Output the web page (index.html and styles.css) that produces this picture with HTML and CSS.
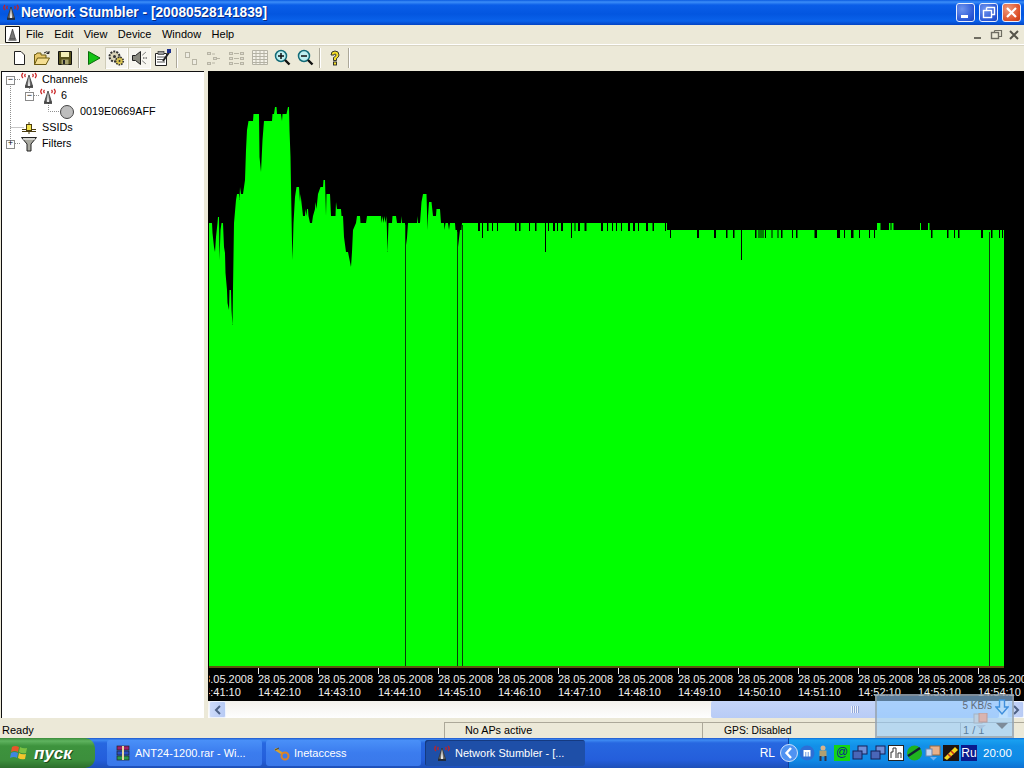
FILE: index.html
```html
<!DOCTYPE html>
<html lang="en">
<head>
<meta charset="utf-8">
<title>Network Stumbler</title>
<link rel="stylesheet" href="styles.css">
</head>
<body>
<svg class="defs" width="0" height="0" aria-hidden="true">
  <symbol id="ant" viewBox="0 0 18 16">
    <path d="M3 1Q.5 3.500 3 6M5.500 2Q4 3.500 5.500 5M15 1Q17.500 3.500 15 6M12.500 2Q14 3.500 12.500 5" fill="none" stroke="#c82020" stroke-width="1.200"/>
    <path d="M9 3L12.500 14H5.500Z" fill="#6e6e6e" stroke="#333" stroke-width=".8"/>
    <path d="M9 4L10.200 14H7.800Z" fill="#e8e8e8"/>
    <path d="M5 15H13" stroke="#222" stroke-width="1.500"/>
  </symbol>
</svg>
<div class="screen">
  <header class="titlebar">
    <svg class="title-icon" width="18" height="18"><use href="#ant"/></svg>
    <span class="title-text">Network Stumbler - [20080528141839]</span>
    <div class="win-buttons">
      <span class="win-btn"><svg width="19" height="19" viewBox="0 0 19 19"><rect x="5" y="12" width="7" height="3" fill="#fff"/></svg></span>
      <span class="win-btn"><svg width="19" height="19" viewBox="0 0 19 19"><path d="M7.500 4.500H15.500V11.500H13M7.500 4.500V7" fill="none" stroke="#fff" stroke-width="1.400"/><rect x="4.500" y="7.500" width="8" height="7" fill="none" stroke="#fff" stroke-width="1.400"/></svg></span>
      <span class="win-btn win-close"><svg width="19" height="19" viewBox="0 0 19 19"><path d="M5 5L14 14M14 5L5 14" stroke="#fff" stroke-width="2.200"/></svg></span>
    </div>
  </header>

  <nav class="menubar">
    <svg class="doc-icon" width="15" height="17" viewBox="0 0 15 17"><path d="M.5.5H14.500V16.500H.5Z" fill="#fff" stroke="#111"/><path d="M7.500 3L10.500 13H4.500Z" fill="#777" stroke="#222" stroke-width=".6"/><path d="M3.500 14H11.500" stroke="#111"/></svg>
    <span>File</span><span>Edit</span><span>View</span><span>Device</span><span>Window</span><span>Help</span>
    <div class="mdi-buttons">
      <svg width="16" height="16" viewBox="0 0 16 16"><rect x="4" y="10" width="7" height="2" fill="#6f6d62"/></svg>
      <svg width="16" height="16" viewBox="0 0 16 16"><path d="M6.500 3.500H13.500V9.500H11M6.500 3.500V5" fill="none" stroke="#6f6d62" stroke-width="1.200"/><rect x="3.500" y="5.500" width="7" height="6" fill="none" stroke="#6f6d62" stroke-width="1.400"/></svg>
      <svg width="16" height="16" viewBox="0 0 16 16"><path d="M4 4L12 12M12 4L4 12" stroke="#56544a" stroke-width="2"/></svg>
    </div>
  </nav>

  <div class="toolbar">
    <span class="tool"><svg width="16" height="16" viewBox="0 0 16 16"><path d="M3.500 1.500H10L13.500 5V14.500H3.500Z" fill="#fff" stroke="#222"/></svg></span>
    <span class="tool"><svg width="18" height="16" viewBox="0 0 18 16"><path d="M1.500 14.500V4.500H3L4 3H8V5H13V14.500Z" fill="#e8c96c" stroke="#6b5a10"/><path d="M1.500 14.500L4.500 8H16.500L13 14.500Z" fill="#f4de92" stroke="#6b5a10"/><path d="M11 3Q14 .5 16 3M16 1V3.500H13.500" fill="none" stroke="#222"/></svg></span>
    <span class="tool"><svg width="16" height="16" viewBox="0 0 16 16"><path d="M1.500 1.500H14.500V14.500H1.500Z" fill="#57521c" stroke="#111"/><rect x="4" y="2" width="8" height="5" fill="#f2eeb8"/><rect x="4.500" y="9.500" width="7" height="5" fill="#a8a470"/><rect x="6" y="10" width="2" height="4" fill="#222"/></svg></span>
    <i class="sep"></i>
    <span class="tool"><svg width="16" height="16" viewBox="0 0 16 16"><path d="M2.500 1.500L14 8L2.500 14.500Z" fill="#14c414" stroke="#0a6a0a"/></svg></span>
    <span class="tool on"><svg width="19" height="18" viewBox="0 0 19 18"><circle cx="7.500" cy="7.500" r="5" fill="#d9d4b8" stroke="#333" stroke-width="2" stroke-dasharray="2 1.100"/><circle cx="7.500" cy="7.500" r="1.500" fill="#333"/><circle cx="12.500" cy="12" r="3.800" fill="#d9c452" stroke="#333" stroke-width="1.600" stroke-dasharray="1.600 1"/><circle cx="12.500" cy="12" r="1" fill="#333"/></svg></span>
    <span class="tool on"><svg width="18" height="16" viewBox="0 0 18 16"><path d="M1.500 5.500H4.500L9.500 1.500V14.500L4.500 10.500H1.500Z" fill="#8a8a80" stroke="#222"/><path d="M12 8H17M11.500 5L15 2M11.500 11L15 14" stroke="#333" stroke-dasharray="1.500 1"/></svg></span>
    <span class="tool"><svg width="18" height="18" viewBox="0 0 18 18"><path d="M1.500 4.500H12.500V16.500H1.500Z" fill="#fff" stroke="#222"/><path d="M3 8H11M3 10.500H11M3 13H11" stroke="#555"/><rect x="4" y="2.500" width="6" height="3" fill="#999" stroke="#222" stroke-width=".6"/><path d="M9 12L15 3.500" stroke="#222" stroke-width="2"/><rect x="13" y="0" width="4" height="4" fill="#1c2f8c"/></svg></span>
    <i class="sep sep-b"></i>
    <span class="tool"><svg width="16" height="16" viewBox="0 0 16 16" fill="#efede2" stroke="#b8b5a5"><rect x="2.500" y="2.500" width="4" height="5"/><rect x="9.500" y="9.500" width="4" height="5"/></svg></span>
    <span class="tool"><svg width="16" height="14" viewBox="0 0 16 14" fill="#dedbd0" stroke="#b8b5a5"><rect x="1.500" y="1.500" width="3" height="2"/><rect x="7.500" y="6.500" width="3" height="2"/><rect x="1.500" y="11.500" width="3" height="2"/><path d="M6 3H9M11 7.500H14M6 12H9" fill="none"/></svg></span>
    <span class="tool"><svg width="16" height="14" viewBox="0 0 16 14" fill="#dedbd0" stroke="#b8b5a5"><rect x=".5" y="1.500" width="3" height="2"/><rect x=".5" y="6.500" width="3" height="2"/><rect x=".5" y="11.500" width="3" height="2"/><rect x="11.500" y="1.500" width="3" height="2"/><rect x="11.500" y="6.500" width="3" height="2"/><rect x="11.500" y="11.500" width="3" height="2"/><path d="M5 2.500H10M5 7.500H10M5 12.500H10" fill="none"/></svg></span>
    <span class="tool"><svg width="16" height="15" viewBox="0 0 16 15"><path d="M.5.5H15.500V14.500H.5ZM.5 3.500H15.500M.5 6.500H15.500M.5 9.500H15.500M.5 12.500H15.500M4 .5V14.500M8 .5V14.500M12 .5V14.500" fill="#f4f2e8" stroke="#b4b2a4"/></svg></span>
    <span class="tool"><svg width="17" height="17" viewBox="0 0 17 17"><circle cx="7" cy="7" r="5.500" fill="#bfeff0" stroke="#136b78" stroke-width="1.500"/><path d="M4 7H10M7 4V10" stroke="#111" stroke-width="1.500"/><path d="M11 11L15.500 15.500" stroke="#111" stroke-width="2.400"/></svg></span>
    <span class="tool"><svg width="17" height="17" viewBox="0 0 17 17"><circle cx="7" cy="7" r="5.500" fill="#bfeff0" stroke="#136b78" stroke-width="1.500"/><path d="M4 7H10" stroke="#111" stroke-width="1.500"/><path d="M11 11L15.500 15.500" stroke="#111" stroke-width="2.400"/></svg></span>
    <i class="sep"></i>
    <span class="tool"><svg width="12" height="16" viewBox="0 0 12 16"><path d="M2 5Q2 1 6 1T10 5Q10 7 7.500 8.500V10.500H4.500V7.500Q7 6.500 7 5Q7 4 6 4T5 5Z" fill="#f5e02a" stroke="#222" stroke-width=".9"/><rect x="4.500" y="12" width="3" height="3" fill="#f5e02a" stroke="#222" stroke-width=".9"/></svg></span>
    <i class="sep"></i>
  </div>

  <main class="workspace">
    <aside class="tree">
      <svg class="tree-lines" width="80" height="90"><path d="M8.500 12V71M13 7.500H18M8.500 55.500H22M13 71.500H18M27.500 16V20M32 23.500H37M46.500 31V39.500H58" fill="none" stroke="#8f8f8f" stroke-dasharray="1 1"/></svg>
      <div class="row d0"><i class="exp">−</i><svg width="18" height="16"><use href="#ant"/></svg><span>Channels</span></div>
      <div class="row d1"><i class="exp">−</i><svg width="18" height="16"><use href="#ant"/></svg><span>6</span></div>
      <div class="row d2"><i class="noexp"></i><svg width="18" height="16" viewBox="0 0 18 16"><circle cx="9" cy="8" r="6.500" fill="#bdbdbd" stroke="#444"/></svg><span>0019E0669AFF</span></div>
      <div class="row d0"><i class="noexp"></i><svg width="18" height="16" viewBox="0 0 18 16"><path d="M2 9.500H16M2 11.500H16" stroke="#4a3c10"/><rect x="6.500" y="4.500" width="5" height="6" fill="#f3e24a" stroke="#4a3c10"/><path d="M9 2V4M9 11V14" stroke="#4a3c10"/></svg><span>SSIDs</span></div>
      <div class="row d0"><i class="exp">+</i><svg width="18" height="16" viewBox="0 0 18 16"><path d="M1.500 1.500H16.500L11 8V15H7V8Z" fill="#a9a9a0" stroke="#222"/><path d="M3 3H15" stroke="#fff"/></svg><span>Filters</span></div>
    </aside>

    <section class="graph">
      <div class="plot">
        <svg class="plot-svg" width="816" height="597" viewBox="208 71 816 597">
          <path fill="#00ff00" d="M209 667V223H212L212.500 233L214 247L215 252L216 237L217.500 223L218 217H219L219.500 260L220.500 230L221.500 223H223L224 247L225 253L225.500 273L227 290L227.500 303L229 310L229.500 290H231L231.500 310L232.500 325L233 290L234 223L236 200L237 194H239L239.500 200L240 187L241 194H243L245 180L246 150L247 130L248.500 121H253L253.500 114H259L259.500 157L261 172L262.500 140L264 121H272L272.500 114H274L275 107H276.500L277 114H281L282 121L282.500 114H286.500L288 107H289L289.500 130L290.500 157L292 243L292.500 260L293.500 223L295 197L296.500 187H299L300 202L300.500 194L302 207L303 216H305L305.500 209L306.500 216L307 209H308L308.500 216L310 223H312L313 216L315 209L315.500 202L316.500 209L318 194L320.500 187H323L323.500 180H325L326 216L326.500 194H330L331 216H335.500L336 202L337 209H341L341.500 216H343L344 237L346 252H348L351 267L352 252L353 230L356 223L357 216H360L360.500 223H366L367 216H381L381.500 223L382.500 216L383.500 223L384.500 216L385.500 223L386.500 216L387.500 252L388.500 223H392L392.500 216H396L397 223H401L401.500 216L402 223H405L406.500 245L408 223H417L417.500 216L418 223H420L421.500 202L423 194H426.500L427.500 230L428 216L429 202H431.500L433 216H436L436.500 209H440L441 223H444L444.500 230L445.500 223H448L449 230L450 223H455L455.500 230H457L458 247L460 230H461.500L462 223H478V231H480V223H482V238H483V223H487V231H488.500V223H492V231H493V223H497V231H498V223H515V231H516.500V223H519V231H520.500V223H529V231H530V223H535V231H536.500V223H545V252H546V223H548V231H549V223H553V231H555V223H557V231H558V223H561V231H563V223H571V238H572V223H574.500V231H575.500V223H578V231H580V223H584.500V231H586.500V223H601V231H603V223H607V231H608V223H612V231H613V223H616V231H617V223H621V231H622V223H628V231H630V223H633V231H635V223H638V231H639V223H646V231H648V223H652.500V231H654V223H665V231H666V223H667V230H670V238H671V230H697V238H699V230H714V238H716V230H726V238H727.500V230H733V238H734.500V230H741V260H742V230H755V238H756.500V230H758.500V238H759.500V230H760.500V238H761.500V230H762.500V238H763.500V230H765V238H766V230H771.500V238H772.500V230H777.500V238H778.500V230H781V238H782.500V230H792V238H793V230H796V238H797.500V230H814.500V238H817V230H837V238H840V230H844V238H845V230H851V238H853.500V230H859V238H860V230H869V238H870V230H874V238H875V230H877V223H880.500V230H889V223H890.500V230H891.500V223H893.500V230H920V223H921V230H928V223H929.500V230H931V238H932.500V230H947V238H948.500V230H954V238H955V230H958V238H959.500V230H981V238H983V230H991V238H992.500V230H999V238H1000V230H1002V238H1003V230H1004V667Z"/>
          <path d="M405.500 225V667M457.500 232V667M462.500 225V667M989.500 232V667" stroke="#0a3d0a" fill="none"/>
          <rect x="209" y="666" width="795" height="2" fill="#5f5410"/>
        </svg>
        <div class="axis">
          <div class="ticks">
            <div class="tick"><span>28.05.2008</span><span>14:41:10</span></div>
            <div class="tick"><span>28.05.2008</span><span>14:42:10</span></div>
            <div class="tick"><span>28.05.2008</span><span>14:43:10</span></div>
            <div class="tick"><span>28.05.2008</span><span>14:44:10</span></div>
            <div class="tick"><span>28.05.2008</span><span>14:45:10</span></div>
            <div class="tick"><span>28.05.2008</span><span>14:46:10</span></div>
            <div class="tick"><span>28.05.2008</span><span>14:47:10</span></div>
            <div class="tick"><span>28.05.2008</span><span>14:48:10</span></div>
            <div class="tick"><span>28.05.2008</span><span>14:49:10</span></div>
            <div class="tick"><span>28.05.2008</span><span>14:50:10</span></div>
            <div class="tick"><span>28.05.2008</span><span>14:51:10</span></div>
            <div class="tick"><span>28.05.2008</span><span>14:52:10</span></div>
            <div class="tick"><span>28.05.2008</span><span>14:53:10</span></div>
            <div class="tick"><span>28.05.2008</span><span>14:54:10</span></div>
          </div>
        </div>
      </div>
      <div class="scrollbar">
        <span class="sb-btn"><svg width="8" height="10" viewBox="0 0 8 10"><path d="M6 1L2 5L6 9" fill="none" stroke="#4d6185" stroke-width="2"/></svg></span>
        <span class="sb-track"></span>
        <span class="sb-thumb"><i class="grip"></i></span>
        <span class="sb-btn sb-right"><svg width="8" height="10" viewBox="0 0 8 10"><path d="M2 1L6 5L2 9" fill="none" stroke="#4d6185" stroke-width="2"/></svg></span>
      </div>
    </section>
  </main>

  <footer class="statusbar">
    <span class="cell cell-ready">Ready</span>
    <span class="cell cell-aps">No APs active</span>
    <span class="cell cell-gps">GPS: Disabled</span>
    <span class="cell cell-page">1 / 1</span>
  </footer>

  <div class="taskbar">
    <div class="start">
      <svg width="20" height="20" viewBox="0 0 20 20"><path d="M2 4Q5 2 9 4L8 9Q5 7 1 9Z" fill="#e8562a"/><path d="M10 4Q13 6 17 5L16 10Q12 11 9 9Z" fill="#7cc242"/><path d="M1 10Q4 8 8 10L7 15Q4 13 0 15Z" fill="#3f86e0"/><path d="M9 10Q12 12 16 11L15 16Q11 17 8 15Z" fill="#f4c52c"/></svg>
      <span>пуск</span>
    </div>
    <div class="tasks">
      <div class="task"><svg width="16" height="16" viewBox="0 0 16 16"><rect x="2" y="1" width="12" height="4" fill="#a0206a" stroke="#222" stroke-width=".7"/><rect x="2" y="6" width="12" height="4" fill="#2a4fc0" stroke="#222" stroke-width=".7"/><rect x="2" y="11" width="12" height="4" fill="#2a9a4a" stroke="#222" stroke-width=".7"/><path d="M7 1H9V15H7" fill="#e8d9a0"/></svg><span>ANT24-1200.rar - Wi...</span></div>
      <div class="task"><svg width="16" height="16" viewBox="0 0 16 16"><path d="M1 4L9 9" stroke="#d7a02c" stroke-width="2.500"/><circle cx="11" cy="11" r="3.500" fill="none" stroke="#d9822c" stroke-width="2"/><path d="M1 5L5 3" stroke="#5b4a10"/></svg><span>Inetaccess</span></div>
      <div class="task active"><svg width="18" height="16"><use href="#ant"/></svg><span>Network Stumbler - [...</span></div>
    </div>
    <div class="lang">RL</div>
    <div class="tray">
      <span class="tray-toggle"><svg width="10" height="12" viewBox="0 0 10 12"><path d="M7 1L2.500 6L7 11" fill="none" stroke="#fff" stroke-width="2.400"/></svg></span>
      <svg width="16" height="16" viewBox="0 0 16 16"><circle cx="8" cy="8" r="7.500" fill="#2c6fd6"/><path d="M4.500 5H11.500V11.500H9.500V7H8.800V11.500H7.200V7H6.500V11.500H4.500Z" fill="#fff"/></svg>
      <svg width="12" height="16" viewBox="0 0 12 16"><circle cx="6" cy="3" r="2.500" fill="#d8b48c"/><rect x="2.500" y="5.500" width="7" height="6" fill="#b0a070"/><path d="M3.500 11V16M8.500 11V16" stroke="#334" stroke-width="2"/></svg>
      <span class="tray-at">@</span>
      <svg width="16" height="16" viewBox="0 0 16 16"><rect x="6" y="1" width="9" height="8" fill="#6f8fd8" stroke="#142058"/><rect x="1" y="6" width="9" height="8" fill="#4a66b8" stroke="#142058"/></svg>
      <svg width="16" height="16" viewBox="0 0 16 16"><rect x="6" y="1" width="9" height="8" fill="#6f8fd8" stroke="#142058"/><rect x="1" y="6" width="9" height="8" fill="#4a66b8" stroke="#142058"/></svg>
      <svg width="16" height="16" viewBox="0 0 16 16"><rect x=".5" y=".5" width="15" height="15" fill="#fff" stroke="#222"/><path d="M3 13V7H5V3H8V13M10 13V8H13V13" fill="none" stroke="#333"/></svg>
      <svg width="17" height="16" viewBox="0 0 17 16"><circle cx="8.500" cy="8" r="7.500" fill="#1fb31f"/><path d="M2 11L14 3" stroke="#123" stroke-width="2.500"/></svg>
      <svg width="16" height="16" viewBox="0 0 16 16"><rect x="5" y="1" width="10" height="9" fill="#e8b08a" stroke="#9a6a40"/><rect x="1" y="4" width="6" height="7" fill="#c8d8f0" stroke="#6a86b0"/><path d="M5 12H12L8.500 15.500Z" fill="#6fb0f0"/></svg>
      <svg width="16" height="16" viewBox="0 0 16 16"><rect width="16" height="16" fill="#1c1410"/><path d="M1 13L12 2L15 5L4 15Z" fill="#f4d61c"/><path d="M5 9L8 12M8 6L11 9" stroke="#c8321c" stroke-width="1.500"/></svg>
      <span class="tray-ru">Ru</span>
      <span class="clock">20:00</span>
    </div>
  </div>

  <div class="net-widget">
    <div class="net-main">
      <span class="net-speed">5 KB/s</span>
      <svg class="net-icon" width="16" height="16" viewBox="0 0 16 16"><rect x="1" y="1" width="8" height="9" fill="#bcd0e2" stroke="#a4b4c4"/><rect x="6" y="0" width="8" height="9" fill="#d9b4b0" stroke="#b89c9c"/><path d="M3 12H13L8 16Z" fill="#a9c4de"/></svg>
    </div>
    <div class="net-side">
      <svg width="14" height="18" viewBox="0 0 14 18"><path d="M4.500 1H9.500V8H13L7 15L1 8H4.500Z" fill="#b5d8fa" stroke="#3f8fdc" stroke-width="1.400"/></svg>
      <svg width="14" height="8" viewBox="0 0 14 8"><path d="M1 1H13L7 7Z" fill="#7d8b99"/></svg>
    </div>
  </div>
</div>
</body>
</html>
```

FILE: styles.css
```css
* { box-sizing: border-box; }

html, body {
  margin: 0;
  padding: 0;
  overflow: hidden;
}

.defs { position: absolute; }

.screen {
  position: relative;
  width: 1024px;
  height: 768px;
  display: flex;
  flex-direction: column;
  overflow: hidden;
  background: #ece9d8;
  font: 11px/13px "Liberation Sans", Arial, sans-serif;
  color: #000;
}

/* title bar */
.titlebar {
  flex: 0 0 25px;
  display: flex;
  align-items: center;
  padding: 0 3px 1px 2px;
  background: linear-gradient(#0a5be0 0, #3c8ef8 2px, #0a5ee8 5px, #0356e0 14px, #0a62ea 21px, #0344c4 25px);
  color: #fff;
}
.title-icon { flex: none; }
.title-text {
  margin-left: 1px;
  font-size: 13.750px;
  font-weight: bold;
  text-shadow: 1px 1px #0a2a80;
}
.win-buttons { margin-left: auto; display: flex; gap: 4px; }
.win-btn {
  width: 19px;
  height: 19px;
  border: 1px solid #e8eefc;
  border-radius: 3px;
  display: flex;
  align-items: center;
  justify-content: center;
  background: radial-gradient(circle at 30% 30%, #6f95ee, #2a57d6 70%, #1d46bd);
}
.win-btn svg { flex: none; }
.win-close { background: radial-gradient(circle at 30% 30%, #ef9a7c, #dd4f26 70%, #c23a15); }

/* menu */
.menubar {
  flex: 0 0 20px;
  display: flex;
  align-items: center;
  gap: 10.500px;
  padding-left: 5px;
  border-bottom: 1px solid #fff;
  background: #ece9d8;
}
.doc-icon { margin-right: -4.500px; flex: none; }
.mdi-buttons {
  margin-left: auto;
  margin-right: 2px;
  display: flex;
  gap: 2px;
}

/* toolbar */
.toolbar {
  flex: 0 0 25px;
  display: flex;
  align-items: center;
  padding: 0 0 1px 7px;
  background: #ece9d8;
  border-top: 1px solid #d8d4c2;
}
.tool {
  flex: 0 0 23px;
  height: 22px;
  display: flex;
  align-items: center;
  justify-content: center;
}
.tool.on {
  background: #f7f6f0;
  box-shadow: inset 1px 1px #cfccb8, inset -1px -1px #fff;
}
.sep {
  flex: 0 0 6px;
  height: 20px;
  background: linear-gradient(90deg, transparent 2px, #aca899 2px, #aca899 3px, #fff 3px, #fff 4px, transparent 4px);
}
.sep-b { flex-basis: 5px; }

/* main area */
.workspace {
  flex: 0 0 650px;
  display: flex;
  gap: 4px;
  padding: 1px 0 2px 1px;
  background: #ece9d8;
}
.tree {
  position: relative;
  flex: 0 0 203px;
  background: #fff;
  border-left: 1px solid #111;
  border-top: 1px solid #111;
}
.tree-lines { position: absolute; left: 0; top: 0; }
.row {
  position: relative;
  height: 16px;
  display: flex;
  align-items: center;
  font-size: 10.800px;
}
.row svg { flex: none; }
.row span { margin-left: 4px; padding-bottom: 2px; white-space: nowrap; }
.d0 { padding-left: 4px; }
.d1 { padding-left: 23px; }
.d2 { padding-left: 42px; }
.exp, .noexp {
  flex: 0 0 14px;
  height: 9px;
}
.exp {
  flex-basis: 9px;
  width: 9px;
  margin-right: 5px;
  border: 1px solid #8a8a8a;
  background: #fff;
  font: 9px/7px "Liberation Mono", monospace;
  text-align: center;
  color: #000;
}

/* graph */
.graph {
  flex: 1;
  display: flex;
  flex-direction: column;
  min-width: 0;
}
.plot {
  flex: 0 0 630px;
  display: flex;
  flex-direction: column;
  background: #000;
  overflow: hidden;
}
.plot-svg { display: block; flex: none; }
.axis {
  flex: 1;
  overflow: hidden;
  border-left: 1px solid #000;
  color: #f0f0f0;
}
.ticks {
  display: flex;
  margin-left: -11px;
}
.tick {
  flex: 0 0 60px;
  display: flex;
  flex-direction: column;
  position: relative;
  padding-top: 5px;
  white-space: nowrap;
}
.tick::before {
  content: "";
  position: absolute;
  left: 0;
  top: 0;
  width: 1px;
  height: 6px;
  background: #eee;
}

.scrollbar {
  flex: 0 0 17px;
  display: flex;
  background: linear-gradient(#f3f1ec, #fefefe);
}
.sb-btn {
  flex: 0 0 17px;
  display: flex;
  align-items: center;
  justify-content: center;
  margin-left: 1px;
  background: linear-gradient(90deg, #cddbfa, #b7caf4);
  border: 1px solid #eef3fd;
  border-radius: 2px;
}
.sb-track { flex: 0 0 485px; }
.sb-thumb {
  flex: 0 0 288px;
  display: flex;
  align-items: center;
  justify-content: center;
  background: linear-gradient(#c4d4f8, #b8ccf6);
  border-radius: 2px;
}
.grip {
  width: 8px;
  height: 7px;
  background: repeating-linear-gradient(90deg, #eef2fc 0 1px, #93a8d8 1px 2px);
}
.sb-right { margin-left: 8px; }

/* status */
.statusbar {
  flex: 0 0 18px;
  display: flex;
  background: #ece9d8;
}
.cell { display: flex; align-items: center; }
.cell-ready { flex: 0 0 444px; padding: 2px 0 0 2px; }
.cell-aps, .cell-gps, .cell-page {
  margin-top: 2px;
  border-left: 1px solid #aca899;
  border-top: 1px solid #aca899;
}
.cell-aps { flex: 0 0 258px; padding-left: 20px; font-size: 10.800px; }
.cell-gps { flex: 0 0 258px; padding-left: 21px; font-size: 10.300px; }
.cell-page { flex: 1; padding-left: 2px; }

/* taskbar */
.taskbar {
  flex: 0 0 30px;
  display: flex;
  align-items: stretch;
  background: linear-gradient(#1e56cc 0, #3f8cf3 2px, #2767e0 5px, #245edb 22px, #1d4fb8 30px);
  color: #fff;
}
.start {
  flex: 0 0 95px;
  display: flex;
  align-items: center;
  gap: 4px;
  padding-left: 10px;
  border-radius: 0 10px 10px 0;
  background: linear-gradient(#3a8c3a 0, #5fb35f 3px, #3d933d 8px, #3c8f3c 22px, #2c6e2c 30px);
  font-size: 17px;
  font-weight: bold;
  font-style: italic;
  text-shadow: 1px 1px #1c4a1c;
}
.tasks {
  flex: 0 0 490px;
  display: flex;
  gap: 4px;
  padding: 2px 0 2px 12px;
}
.task {
  flex: 0 0 155px;
  display: flex;
  align-items: center;
  gap: 4px;
  padding-left: 8px;
  border-radius: 3px;
  background: linear-gradient(#4a90f8, #3b7cee 50%, #3a78ea);
  white-space: nowrap;
  font-size: 11px;
}
.task.active {
  flex-basis: 160px;
  background: #1e4fa8;
  box-shadow: inset 1px 1px #153a80;
}
.lang {
  flex: 0 0 203px;
  display: flex;
  align-items: center;
  justify-content: flex-end;
  padding-right: 13px;
  font-size: 12px;
}
.tray {
  flex: 1;
  display: flex;
  align-items: center;
  gap: 2px;
  border-left: 1px solid #0e3f9e;
  background: linear-gradient(#0f6fdc 0, #19a0f0 2px, #1290e8 8px, #0f8ae6 22px, #0e70d2 30px);
  min-width: 0;
}
.tray svg { flex: none; }
.tray-toggle {
  flex: none;
  width: 18px;
  height: 18px;
  margin: 0 -1px 0 -9px;
  border-radius: 50%;
  display: flex;
  align-items: center;
  justify-content: center;
  background: #4f93f2;
  border: 1px solid #cfe2fb;
}
.tray-at {
  flex: none;
  width: 16px;
  height: 16px;
  margin-left: 3px;
  background: #14d414;
  color: #0a2a8a;
  text-align: center;
  font-size: 12px;
  line-height: 15px;
}
.tray-ru {
  flex: none;
  width: 16px;
  height: 16px;
  background: #0a1a8c;
  text-align: center;
  font-size: 12px;
  line-height: 16px;
}
.clock { margin-left: 4px; font-size: 11.500px; white-space: nowrap; }

/* floating translucent network meter */
.net-widget {
  position: absolute;
  left: 875px;
  top: 694px;
  width: 139px;
  height: 44px;
  display: flex;
  background: rgba(150, 205, 255, .6);
  border: 2px solid rgba(150, 150, 150, .6);
  color: #5f6a78;
}
.net-main {
  flex: 1;
  display: flex;
  flex-direction: column;
  align-items: flex-end;
  padding: 3px 0 0 0;
}
.net-speed { font-size: 10px; }
.net-icon { position: absolute; left: 96px; top: 17px; }
.net-side {
  flex: 0 0 20px;
  display: flex;
  flex-direction: column;
  align-items: center;
  gap: 5px;
  padding-top: 3px;
}
```
